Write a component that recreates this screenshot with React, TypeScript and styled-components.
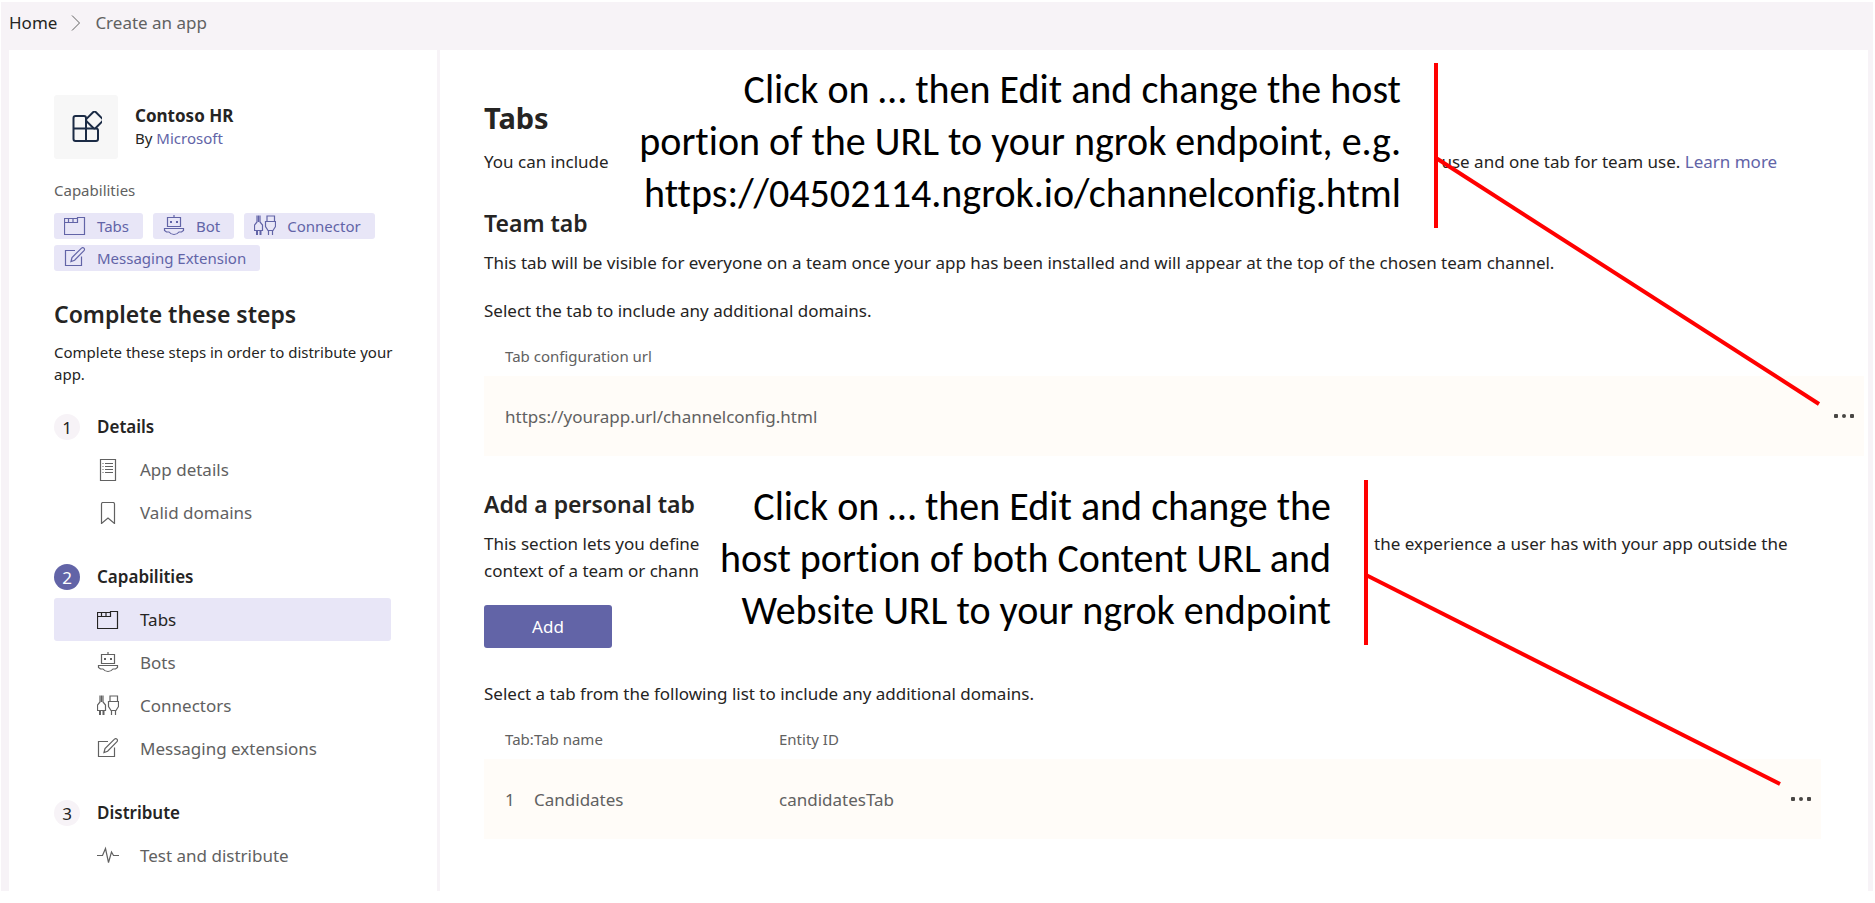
import React from 'react';
import styled, { createGlobalStyle } from 'styled-components';

const uiFont = '"Noto Sans", "Open Sans", sans-serif';

const GlobalStyle = createGlobalStyle`
  *, *::before, *::after { box-sizing: border-box; }
  body {
    margin: 0;
    background: #ffffff;
    color: #252423;
    font-family: ${uiFont};
    font-size: 17px;
    line-height: 27px;
  }
  h1, h2, p, ul, ol { margin: 0; padding: 0; }
  ul, ol { list-style: none; }
`;

const Page = styled.div`
  display: flex;
  min-height: 100vh;
  padding: 2px 2px 12px 1px;
`;

const Shell = styled.div`
  flex: 1;
  min-width: 0;
  display: flex;
  flex-direction: column;
  background: #f7f3f7;
`;

const Breadcrumb = styled.nav`
  display: flex;
  align-items: center;
  gap: 14px;
  height: 48px;
  padding: 0 8px 7px;
`;

const CrumbLink = styled.a`
  color: #252423;
  text-decoration: none;
`;

const Crumb = styled.span`
  color: #616161;
`;

const Columns = styled.div`
  flex: 1;
  display: flex;
  gap: 3px;
  padding: 0 5px 0 8px;
`;

const Sidebar = styled.aside`
  flex: 0 0 428px;
  min-width: 0;
  padding: 45px 46px 14px 45px;
  background: #ffffff;
`;

const AppSummary = styled.div`
  display: flex;
  align-items: center;
  gap: 17px;
`;

const AppLogo = styled.div`
  display: grid;
  place-items: center;
  width: 64px;
  height: 64px;
  border-radius: 3px;
  background: #f7f7f7;
`;

const AppName = styled.div`
  font-weight: 700;
  line-height: 22px;
`;

const Publisher = styled.div`
  font-size: 15px;
  line-height: 22px;
`;

const TextLink = styled.a`
  color: #6264a7;
  text-decoration: none;
`;

const SmallLabel = styled.div`
  margin: 20px 0 12px;
  color: #616161;
  font-size: 15px;
  line-height: 22px;
`;

const TagList = styled.ul`
  display: flex;
  flex-wrap: wrap;
  gap: 6px 10px;
`;

const Tag = styled.li`
  display: flex;
  align-items: center;
  gap: 11px;
  height: 26px;
  padding: 0 14px 0 10px;
  border-radius: 3px;
  background: #e8e6f7;
  color: #6264a7;
  font-size: 15px;
  line-height: 22px;
`;

const SectionTitle = styled.h2`
  font-size: 23px;
  font-weight: 600;
  line-height: 32px;
`;

const StepsIntro = styled.div`
  margin: 27px 0 20px;
`;

const StepsHint = styled.p`
  margin-top: 11px;
  font-size: 15px;
  line-height: 22px;
  white-space: nowrap;
`;

const Steps = styled.ol`
  display: flex;
  flex-direction: column;
  gap: 21px;
`;

const StepHeader = styled.div`
  display: flex;
  align-items: center;
  gap: 17px;
  height: 43px;
  font-weight: 600;
`;

const StepNumber = styled.span<{ $active?: boolean }>`
  display: grid;
  place-items: center;
  width: 26px;
  height: 26px;
  border-radius: 50%;
  background: ${p => (p.$active ? '#6264a7' : '#f7f3f7')};
  color: ${p => (p.$active ? '#ffffff' : '#252423')};
  font-weight: 400;
`;

const StepLink = styled.a<{ $active?: boolean }>`
  display: flex;
  align-items: center;
  gap: 21px;
  height: 43px;
  padding-left: 43px;
  border-radius: 3px;
  background: ${p => (p.$active ? '#e8e6f7' : 'transparent')};
  color: ${p => (p.$active ? '#252423' : '#616161')};
  text-decoration: none;
`;

const Main = styled.main`
  position: relative;
  flex: 1;
  min-width: 0;
  padding: 48px 4px 0 44px;
  background: #ffffff;
`;

const PageTitle = styled.h1`
  margin-bottom: 10px;
  font-size: 29px;
  font-weight: 700;
  line-height: 40px;
`;

const Section = styled.section<{ $right?: number }>`
  padding-top: 32px;
  padding-right: ${p => p.$right ?? 0}px;
`;

const SplitText = styled.div`
  display: flex;
  justify-content: space-between;
  white-space: nowrap;
`;

const SplitEnd = styled.p<{ $width: number }>`
  flex: 0 0 ${p => p.$width}px;
`;

const SectionText = styled.div`
  margin: 10px 0 21px;
`;

const PrimaryButton = styled.button`
  display: block;
  width: 128px;
  height: 43px;
  margin-bottom: 32px;
  border: 0;
  border-radius: 3px;
  background: #6264a7;
  color: #ffffff;
  font: inherit;
`;

const DataTable = styled.table`
  width: 100%;
  border-collapse: collapse;
  table-layout: fixed;
  color: #616161;
  text-align: left;
`;

const HeadCell = styled.th<{ $width?: number }>`
  width: ${p => (p.$width ? `${p.$width}px` : 'auto')};
  padding: 21px 0 9px;
  font-size: 15px;
  font-weight: 400;
  line-height: 22px;
  white-space: nowrap;

  &:first-child { padding-left: 21px; }
`;

const Cell = styled.td`
  height: 80px;
  padding: 0;
  background: #fffcf8;

  &:first-child { padding-left: 21px; }
`;

const MoreButton = styled.button`
  display: flex;
  align-items: center;
  justify-content: center;
  width: 41px;
  height: 32px;
  margin-left: auto;
  padding: 0;
  border: 0;
  background: transparent;
  color: #484644;
`;

const Callout = styled.aside<{ $top: number; $right: number; $width: number }>`
  position: absolute;
  top: ${p => p.$top}px;
  right: ${p => p.$right}px;
  width: ${p => p.$width}px;
  padding: 1px 33px 8px 0;
  border-right: 4px solid #ff0000;
  background: #ffffff;
  color: #000000;
  font-family: Carlito, Calibri, Lato, sans-serif;
  font-size: 40px;
  font-variant-ligatures: none;
  line-height: 52px;
  text-align: right;
  white-space: nowrap;
`;

const Connector = styled.svg`
  position: absolute;
  top: 95px;
  left: 100%;
  overflow: visible;
  pointer-events: none;
`;

const IconSvg = styled.svg`
  flex: none;
  display: block;
`;

type IconName = 'tabs' | 'bot' | 'connector' | 'compose' | 'document' | 'bookmark' | 'pulse';

const shapes: Record<IconName, React.ReactNode> = {
  tabs: <path d="M.5 3.5H13.5V2.5H20.5V19.5H.5ZM.5 7.5H13.5V3.5M4.5 3.5V7.5M9 3.5V7.5" />,
  bot: (
    <>
      <path d="M11 0V2.5M4.5 2.5H17.5V11.5H4.5ZM1.5 13.5H20.5V15.5L18.5 17H16Q14 19.5 11 19.5T6 17H3.5L1.5 15.5Z" />
      <path d="M7 6h2v2H7zM13 6h2v2h-2z" fill="currentColor" stroke="none" />
    </>
  ),
  connector: (
    <>
      <path d="M3 .5V7L.5 10V15.5H8.5V10L6 7V.5M4.5 .5V7" />
      <path d="M2 15h2v5H2zM5.5 15h2v5h-2z" fill="currentColor" stroke="none" />
      <path d="M13 6.5V1H20.5V6.5M11.5 6.5H21.5V11.5L19 15.5H14L11.5 11.5ZM14.5 15.5V20M18.5 15.5V20" />
    </>
  ),
  compose: (
    <path d="M11 3.5H1.5V18.5H17.5V9.5M7 14.5L8 10.5L17.5 1.2A1.7 1.7 0 0 1 20 3.6L10.6 13.2Z" />
  ),
  document: (
    <path d="M3.5 .5H18.5V21.5H3.5ZM8 4.5H16M8 7.5H16M8 10.5H16M8 13.5H16M5.5 4.5H6.5M5.5 7.5H6.5M5.5 10.5H6.5M5.5 13.5H6.5" />
  ),
  bookmark: <path d="M4.5 21.5V2Q4.5 .5 6 .5H16Q17.5 .5 17.5 2V21.5L11 16Z" />,
  pulse: <path d="M0 10.5H5.5L8.5 3.5L11.5 17.5L14.5 7L16.5 10.5H22" />,
};

const Icon = ({ name }: { name: IconName }) => (
  <IconSvg
    width="22"
    height="22"
    viewBox="0 0 22 22"
    fill="none"
    stroke="currentColor"
    strokeWidth="1.2"
    aria-hidden="true"
  >
    {shapes[name]}
  </IconSvg>
);

const LogoIcon = () => (
  <IconSvg width="32" height="32" viewBox="0 0 32 32" fill="none" stroke="#1b2b45" strokeWidth="2" aria-hidden="true">
    <path d="M16 17V7Q16 5 14 5H5.5Q3.5 5 3.5 7V28Q3.5 30 5.5 30H26Q28 30 28 28V19.5Q28 17.5 26 17.5H3.5M16 17V30" />
    <rect x="18" y="2.5" width="13" height="13" rx="2" transform="rotate(45 24.5 9)" fill="#f7f7f7" />
  </IconSvg>
);

const ChevronIcon = () => (
  <IconSvg width="10" height="18" viewBox="0 0 10 18" fill="none" stroke="#616161" aria-hidden="true">
    <path d="M1 1.5L8.5 9L1 16.5" />
  </IconSvg>
);

const More = ({ label }: { label: string }) => (
  <MoreButton type="button" aria-label={label}>
    <IconSvg width="20" height="4" viewBox="0 0 20 4" fill="currentColor" aria-hidden="true">
      <rect width="4" height="4" rx="1" />
      <rect x="8" width="4" height="4" rx="2" />
      <rect x="16" width="4" height="4" rx="1" />
    </IconSvg>
  </MoreButton>
);

const tags: { icon: IconName; label: string }[] = [
  { icon: 'tabs', label: 'Tabs' },
  { icon: 'bot', label: 'Bot' },
  { icon: 'connector', label: 'Connector' },
  { icon: 'compose', label: 'Messaging Extension' },
];

const steps: { title: string; active?: boolean; items: { icon: IconName; label: string; active?: boolean }[] }[] = [
  {
    title: 'Details',
    items: [
      { icon: 'document', label: 'App details' },
      { icon: 'bookmark', label: 'Valid domains' },
    ],
  },
  {
    title: 'Capabilities',
    active: true,
    items: [
      { icon: 'tabs', label: 'Tabs', active: true },
      { icon: 'bot', label: 'Bots' },
      { icon: 'connector', label: 'Connectors' },
      { icon: 'compose', label: 'Messaging extensions' },
    ],
  },
  { title: 'Distribute', items: [{ icon: 'pulse', label: 'Test and distribute' }] },
];

export default function App() {
  return (
    <Page>
      <GlobalStyle />
      <Shell>
        <Breadcrumb aria-label="Breadcrumb">
          <CrumbLink href="#home">Home</CrumbLink>
          <ChevronIcon />
          <Crumb>Create an app</Crumb>
        </Breadcrumb>
        <Columns>
          <Sidebar>
            <AppSummary>
              <AppLogo>
                <LogoIcon />
              </AppLogo>
              <div>
                <AppName>Contoso HR</AppName>
                <Publisher>
                  By <TextLink href="#microsoft">Microsoft</TextLink>
                </Publisher>
              </div>
            </AppSummary>
            <SmallLabel>Capabilities</SmallLabel>
            <TagList>
              {tags.map(tag => (
                <Tag key={tag.label}>
                  <Icon name={tag.icon} />
                  {tag.label}
                </Tag>
              ))}
            </TagList>
            <StepsIntro>
              <SectionTitle>Complete these steps</SectionTitle>
              <StepsHint>
                Complete these steps in order to distribute your
                <br />
                app.
              </StepsHint>
            </StepsIntro>
            <Steps>
              {steps.map((step, index) => (
                <li key={step.title}>
                  <StepHeader>
                    <StepNumber $active={step.active}>{index + 1}</StepNumber>
                    {step.title}
                  </StepHeader>
                  {step.items.map(item => (
                    <StepLink key={item.label} href={`#${item.icon}`} $active={item.active}>
                      <Icon name={item.icon} />
                      {item.label}
                    </StepLink>
                  ))}
                </li>
              ))}
            </Steps>
          </Sidebar>

          <Main>
            <PageTitle>Tabs</PageTitle>
            <SplitText>
              <p>You can include</p>
              <SplitEnd $width={434}>
                r use and one tab for team use. <TextLink href="#learn-more">Learn more</TextLink>
              </SplitEnd>
            </SplitText>

            <Section>
              <SectionTitle>Team tab</SectionTitle>
              <SectionText>
                This tab will be visible for everyone on a team once your app has been installed and will appear at the
                top of the chosen team channel.
              </SectionText>
              <p>Select the tab to include any additional domains.</p>
              <DataTable>
                <thead>
                  <tr>
                    <HeadCell>Tab configuration url</HeadCell>
                    <HeadCell $width={47} aria-label="Actions" />
                  </tr>
                </thead>
                <tbody>
                  <tr>
                    <Cell>https://yourapp.url/channelconfig.html</Cell>
                    <Cell>
                      <More label="More options for the team tab" />
                    </Cell>
                  </tr>
                </tbody>
              </DataTable>
            </Section>

            <Section $right={43}>
              <SectionTitle>Add a personal tab</SectionTitle>
              <SectionText as={SplitText}>
                <p>
                  This section lets you define
                  <br />
                  context of a team or chann
                </p>
                <SplitEnd $width={447}>the experience a user has with your app outside the</SplitEnd>
              </SectionText>
              <PrimaryButton type="button">Add</PrimaryButton>
              <p>Select a tab from the following list to include any additional domains.</p>
              <DataTable>
                <thead>
                  <tr>
                    <HeadCell $width={50}>Tab:</HeadCell>
                    <HeadCell $width={245}>Tab name</HeadCell>
                    <HeadCell>Entity ID</HeadCell>
                    <HeadCell $width={47} aria-label="Actions" />
                  </tr>
                </thead>
                <tbody>
                  <tr>
                    <Cell>1</Cell>
                    <Cell>Candidates</Cell>
                    <Cell>candidatesTab</Cell>
                    <Cell>
                      <More label="More options for Candidates" />
                    </Cell>
                  </tr>
                </tbody>
              </DataTable>
            </Section>

            <Callout $top={13} $right={430} $width={820}>
              Click on … then Edit and change the host
              <br />
              portion of the URL to your ngrok endpoint, e.g.
              <br />
              https://04502114.ngrok.io/channelconfig.html
              <Connector width="386" height="246" viewBox="0 0 386 246">
                <line x1="2" y1="0" x2="385" y2="246" stroke="#ff0000" strokeWidth="4" />
              </Connector>
            </Callout>

            <Callout $top={430} $right={500} $width={662}>
              Click on … then Edit and change the
              <br />
              host portion of both Content URL and
              <br />
              Website URL to your ngrok endpoint
              <Connector width="416" height="210" viewBox="0 0 416 210">
                <line x1="2" y1="0" x2="416" y2="209" stroke="#ff0000" strokeWidth="4" />
              </Connector>
            </Callout>
          </Main>
        </Columns>
      </Shell>
    </Page>
  );
}
